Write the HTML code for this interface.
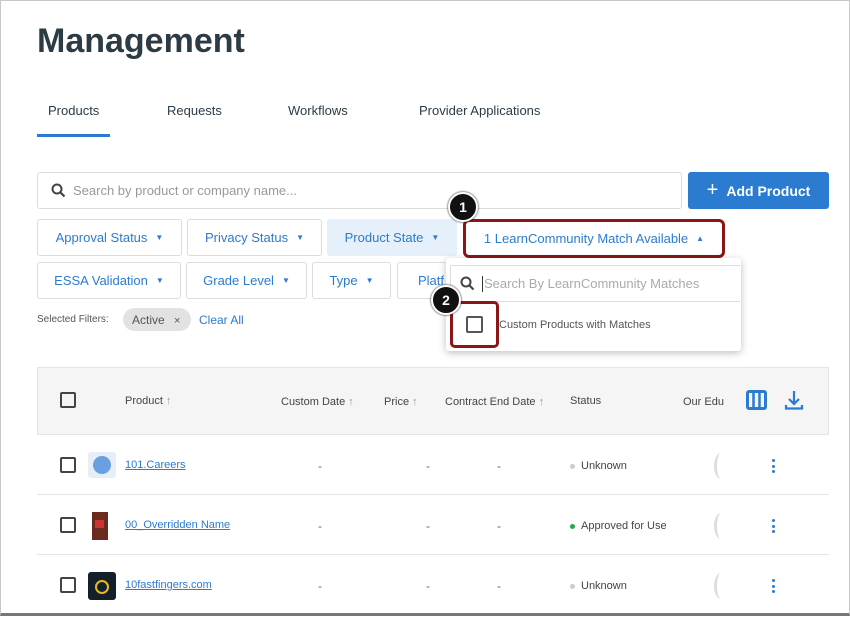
<!DOCTYPE html>
<html><head><style>
*{box-sizing:border-box;margin:0;padding:0}
body{width:850px;height:618px;overflow:hidden;background:#fff;font-family:"Liberation Sans",sans-serif;position:relative;color:#2d3b45}
.frame{position:absolute;left:0;top:0;width:850px;height:616px;border:1px solid #c8c8c8;border-bottom:3px solid #777}
.a{position:absolute}
.f{position:absolute;border:1px solid #dcdcdc;border-radius:3px;color:#2b7bd0;font-size:13px;display:flex;align-items:center;justify-content:center;gap:8px;background:#fff}
.f i{font-style:normal;font-size:8px}
.cb{position:absolute;width:16px;height:16px;border:2px solid #444;border-radius:2px}
.th{position:absolute;top:395px;font-size:11px;color:#444}
.row{position:absolute;left:37px;width:792px;height:60px;border-top:1px solid #e5e5e5}
.lnk{position:absolute;color:#2b7bd0;text-decoration:underline;font-size:11px}
.dash{position:absolute;font-size:12px;color:#666}
.st{position:absolute;font-size:11px;color:#444}
.dot{display:inline-block;width:5px;height:5px;border-radius:50%;margin-right:6px;vertical-align:middle}
.kb{position:absolute;left:772px;width:4px}
.kb b{display:block;width:3px;height:3px;background:#2b7bd0;border-radius:50%;margin-bottom:2.5px}
.badge{position:absolute;width:30px;height:30px;border-radius:50%;background:#111;color:#fff;font-size:14px;font-weight:bold;display:flex;align-items:center;justify-content:center;border:2px solid #fff;box-shadow:0 0 2px #000}
.ring{position:absolute;left:714px;width:14px;height:26px;border-left:3px solid #ddd;border-radius:50%}
</style></head><body>
<div class="frame"></div>
<div class="a" style="left:37px;top:22px;font-size:34px;font-weight:bold;color:#2d3b45">Management</div>
<div class="a" style="left:48px;top:103px;font-size:13px">Products</div>
<div class="a" style="left:167px;top:103px;font-size:13px">Requests</div>
<div class="a" style="left:288px;top:103px;font-size:13px">Workflows</div>
<div class="a" style="left:419px;top:103px;font-size:13px">Provider Applications</div>
<div class="a" style="left:37px;top:134px;width:73px;height:3px;background:#2b7bd0"></div>

<div class="a" style="left:37px;top:172px;width:645px;height:37px;border:1px solid #dcdcdc;border-radius:3px"></div>
<svg class="a" style="left:51px;top:183px" width="15" height="15" viewBox="0 0 15 15"><circle cx="6" cy="6" r="4.5" fill="none" stroke="#444" stroke-width="2"/><path d="M9.5 9.5L13.5 13.5" stroke="#444" stroke-width="2.2"/></svg>
<div class="a" style="left:73px;top:183px;font-size:13px;color:#999">Search by product or company name...</div>
<div class="a" style="left:688px;top:172px;width:141px;height:37px;background:#2b7bd0;border-radius:3px;color:#fff;font-size:14px;font-weight:bold;display:flex;align-items:center;justify-content:center"><span style="font-size:20px;font-weight:normal;margin-right:8px">+</span>Add Product</div>

<div class="f" style="left:37px;top:219px;width:145px;height:37px">Approval Status <i>▼</i></div>
<div class="f" style="left:187px;top:219px;width:135px;height:37px">Privacy Status <i>▼</i></div>
<div class="f" style="left:327px;top:219px;width:130px;height:37px;background:#e6f0fa;border-color:#e6f0fa">Product State <i>▼</i></div>
<div class="f" style="left:463px;top:219px;width:262px;height:39px;border:3px solid #8b1616;border-radius:6px">1 LearnCommunity Match Available <i>▲</i></div>
<div class="f" style="left:37px;top:262px;width:144px;height:37px">ESSA Validation <i>▼</i></div>
<div class="f" style="left:186px;top:262px;width:121px;height:37px">Grade Level <i>▼</i></div>
<div class="f" style="left:312px;top:262px;width:79px;height:37px">Type <i>▼</i></div>
<div class="f" style="left:397px;top:262px;width:60px;height:37px;justify-content:flex-start;padding-left:20px">Platf</div>

<div class="a" style="left:37px;top:314px;font-size:10px;color:#555">Selected Filters:</div>
<div class="a" style="left:123px;top:308px;width:68px;height:23px;background:#e2e2e2;border-radius:12px;font-size:12px;color:#555;padding:5px 0 0 9px">Active <span style="margin-left:6px;font-size:11px">×</span></div>
<div class="a" style="left:199px;top:313px;font-size:12px;color:#2b7bd0">Clear All</div>

<div class="a" style="left:446px;top:258px;width:295px;height:93px;background:#fff;box-shadow:0 2px 8px rgba(0,0,0,.25);border-radius:3px"></div>
<div class="a" style="left:450px;top:265px;width:290px;height:37px;border:1px solid #ddd;border-right:0"></div>
<svg class="a" style="left:460px;top:276px" width="15" height="15" viewBox="0 0 15 15"><circle cx="6" cy="6" r="4.5" fill="none" stroke="#444" stroke-width="2"/><path d="M9.5 9.5L13.5 13.5" stroke="#444" stroke-width="2.2"/></svg>
<div class="a" style="left:482px;top:276px;width:1px;height:16px;background:#333"></div>
<div class="a" style="left:484px;top:276px;font-size:13px;color:#aaa">Search By LearnCommunity Matches</div>
<div class="a" style="left:450px;top:301px;width:49px;height:47px;border:3px solid #8b1616;border-radius:5px"></div>
<div class="cb" style="left:466px;top:316px;width:17px;height:17px;border-color:#555"></div>
<div class="a" style="left:499px;top:319px;font-size:11px;color:#555">Custom Products with Matches</div>
<div class="badge" style="left:448px;top:192px">1</div>
<div class="badge" style="left:431px;top:285px">2</div>

<div class="a" style="left:37px;top:367px;width:792px;height:67px;background:#f5f5f5;border:1px solid #e5e5e5;border-bottom:0"></div>
<div class="cb" style="left:60px;top:392px"></div>
<div class="th" style="left:125px">Product <span style="color:#999">↑</span></div>
<div class="th" style="left:281px;top:396px">Custom Date <span style="color:#999">↑</span></div>
<div class="th" style="left:384px;top:396px">Price <span style="color:#999">↑</span></div>
<div class="th" style="left:445px;top:396px">Contract End Date <span style="color:#999">↑</span></div>
<div class="th" style="left:570px">Status</div>
<div class="th" style="left:683px;top:396px">Our Edu</div>
<svg class="a" style="left:746px;top:390px" width="21" height="20" viewBox="0 0 21 20"><rect x="1.5" y="1.5" width="18" height="17" rx="1.5" fill="none" stroke="#2b7bd0" stroke-width="3"/><path d="M7.5 2v16M13.5 2v16" stroke="#2b7bd0" stroke-width="2.5"/></svg>
<svg class="a" style="left:784px;top:390px" width="20" height="21" viewBox="0 0 20 21"><path d="M10 1v13M5 9l5 5 5-5M2 15v3.5h16V15" fill="none" stroke="#2b7bd0" stroke-width="2.2"/></svg>

<div class="row" style="top:434px"></div>
<div class="row" style="top:494px"></div>
<div class="row" style="top:554px"></div>

<div class="cb" style="left:60px;top:457px"></div>
<div class="a" style="left:88px;top:452px;width:28px;height:26px;background:#e8eef5;border-radius:3px;overflow:hidden"><div style="margin:4px 5px;width:18px;height:18px;border-radius:50%;background:#6aa0e0"></div></div>
<div class="lnk" style="left:125px;top:459px">101.Careers</div>
<div class="dash" style="left:318px;top:459px">-</div><div class="dash" style="left:426px;top:459px">-</div><div class="dash" style="left:497px;top:459px">-</div>
<div class="st" style="left:570px;top:460px"><span class="dot" style="background:#ccc"></span>Unknown</div>
<div class="ring" style="top:453px"></div>
<div class="kb" style="top:459px"><b></b><b></b><b></b></div>

<div class="cb" style="left:60px;top:517px"></div>
<div class="a" style="left:92px;top:512px;width:16px;height:28px;background:#6a2a20"><div style="margin:8px 3px;width:9px;height:8px;background:#c33"></div></div>
<div class="lnk" style="left:125px;top:519px">00_Overridden Name</div>
<div class="dash" style="left:318px;top:519px">-</div><div class="dash" style="left:426px;top:519px">-</div><div class="dash" style="left:497px;top:519px">-</div>
<div class="st" style="left:570px;top:520px"><span class="dot" style="background:#2aa84a"></span>Approved for Use</div>
<div class="ring" style="top:513px"></div>
<div class="kb" style="top:519px"><b></b><b></b><b></b></div>

<div class="cb" style="left:60px;top:577px"></div>
<div class="a" style="left:88px;top:572px;width:28px;height:28px;background:#13202b;border-radius:3px"><div style="margin:8px 7px;width:14px;height:14px;border-radius:50%;border:2px solid #e6b820"></div></div>
<div class="lnk" style="left:125px;top:579px">10fastfingers.com</div>
<div class="dash" style="left:318px;top:579px">-</div><div class="dash" style="left:426px;top:579px">-</div><div class="dash" style="left:497px;top:579px">-</div>
<div class="st" style="left:570px;top:580px"><span class="dot" style="background:#ccc"></span>Unknown</div>
<div class="ring" style="top:573px"></div>
<div class="kb" style="top:579px"><b></b><b></b><b></b></div>
</body></html>
